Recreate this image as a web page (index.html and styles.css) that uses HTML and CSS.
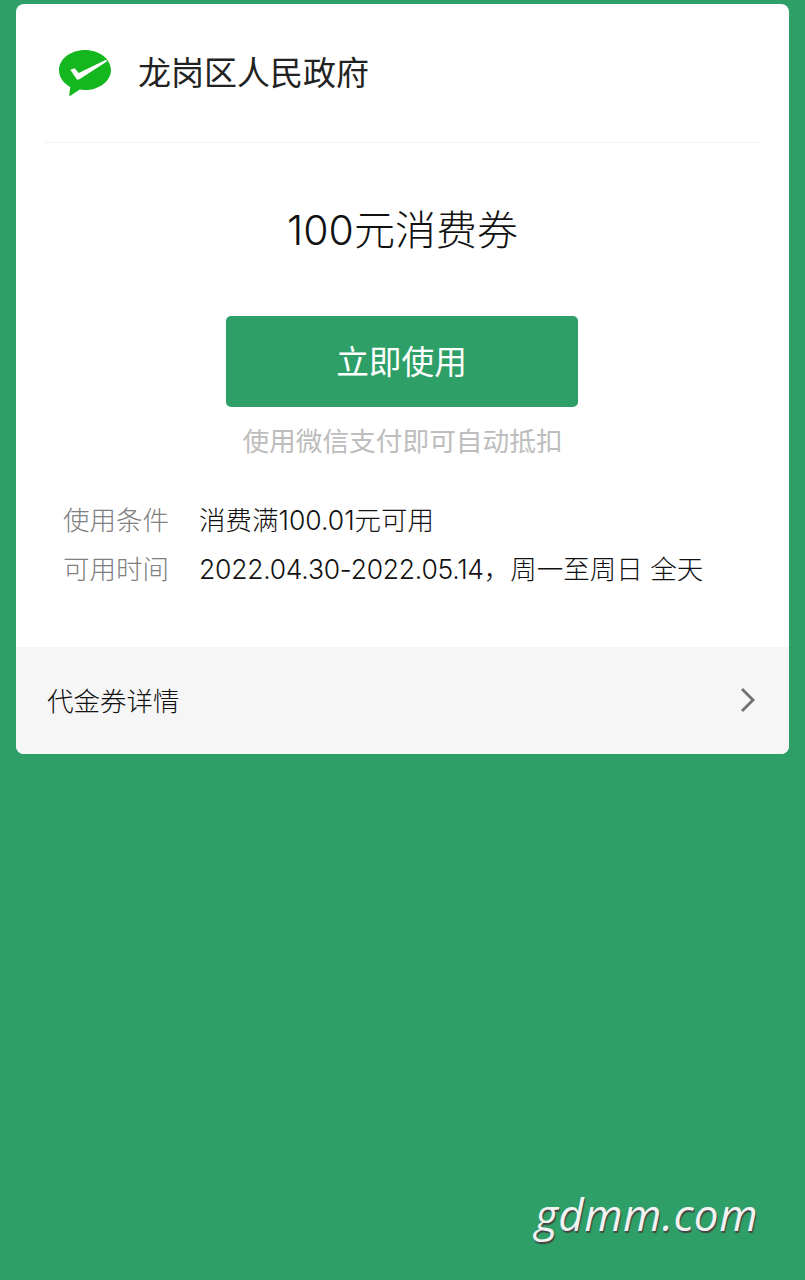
FILE: index.html
```html
<!DOCTYPE html>
<html lang="zh">
<head>
    <meta charset="utf-8">
    <title>100元消费券</title>
    <link rel="stylesheet" href="styles.css">
</head>
<body>
    <div class="card">
        <div class="merchant">
            <svg class="logo" viewBox="0 0 52 46" width="52" height="46">
                <path fill="#14b81e" d="M26 0C11.800 0 0 8.900 0 20.200c0 7 4.500 13 11.200 16.700l-.9 8.300c-.1.700.5 1 1 .6l9.600-6.200c1.600.3 3.300.4 5.100.4 14.200 0 26-9.100 26-19.800C52 8.900 40.200 0 26 0z"/>
                <path fill="#fff" d="M11.300 19.800l4.400-1.500 4 4.600L47 9.700l1.300 1.600-27.900 17.900-2.300.5z"/>
            </svg>
            <span class="merchant-name">龙岗区人民政府</span>
        </div>
        <h1 class="coupon-title">100元消费券</h1>
        <button class="use-btn" type="button">立即使用</button>
        <p class="hint">使用微信支付即可自动抵扣</p>
        <div class="info">
            <div class="info-row">
                <span class="info-label">使用条件</span>
                <span class="info-value">消费满100.01元可用</span>
            </div>
            <div class="info-row">
                <span class="info-label">可用时间</span>
                <span class="info-value"><span class="date-range">2022.04.30-2022.05.14</span>，周一至周日 全天</span>
            </div>
        </div>
        <div class="detail-link">
            <span>代金券详情</span>
            <svg class="chevron" viewBox="0 0 16 26" width="16" height="26">
                <path d="M2 2l11 11L2 24" fill="none" stroke="#6f6f6f" stroke-width="2.800"/>
            </svg>
        </div>
    </div>
    <div class="watermark">gdmm.com</div>
</body>
</html>
```

FILE: styles.css
```css
body {
    margin: 0;
    height: 1280px;
    overflow: hidden;
    position: relative;
    padding: 4px 16px 0;
    box-sizing: border-box;
    background-color: #2ea067;
    font-family: Inter, "Noto Sans CJK SC", sans-serif;
    color: #222;
}
.card {
    display: flex;
    flex-direction: column;
    height: 750px;
    background: white;
    border-radius: 8px;
    overflow: hidden;
}
.merchant {
    display: flex;
    align-items: center;
    height: 138px;
    margin: 0 29px 0 28px;
    padding-left: 15px;
    border-bottom: 1px solid #f2f2f2;
}
.merchant-name {
    margin-left: 27px;
    font-size: 33px;
    line-height: 40px;
}
.coupon-title {
    margin: 61px 0 0;
    font-size: 41px;
    line-height: 52px;
    font-weight: 300;
    color: #111;
    text-align: center;
}
.use-btn {
    align-self: center;
    width: 352px;
    height: 91px;
    margin: 60px 2px 0 0;
    padding: 0 0 5px;
    background-color: #2ea067;
    color: white;
    border: none;
    border-radius: 5px;
    font-family: inherit;
    font-size: 32.700px;
}
.hint {
    margin: 16px 0 0;
    font-size: 26.700px;
    line-height: 36px;
    color: #bdbdbd;
    text-align: center;
}
.info {
    margin: 37px 0 0 47px;
}
.info-row {
    display: flex;
    height: 49px;
    font-size: 26.500px;
    line-height: 49px;
    font-weight: 300;
    color: #111;
}
.info-label {
    width: 136px;
    color: #808080;
}
.date-range {
    letter-spacing: -0.25px;
}
.detail-link {
    display: flex;
    align-items: center;
    justify-content: space-between;
    height: 107px;
    margin-top: auto;
    padding: 0 33px 0 31px;
    background-color: #f6f6f6;
    font-size: 26.500px;
    font-weight: 300;
    color: #111;
}
.detail-link span {
    margin-top: -3px;
}
.chevron {
    margin-top: -2px;
}
.watermark {
    position: absolute;
    right: 47px;
    top: 1185px;
    font-family: "Open Sans", sans-serif;
    font-style: italic;
    font-weight: 500;
    font-size: 44px;
    letter-spacing: 0.5px;
    line-height: 58px;
    color: #f2f2f2;
    text-shadow: 1px 2px 1px #444;
}
```
